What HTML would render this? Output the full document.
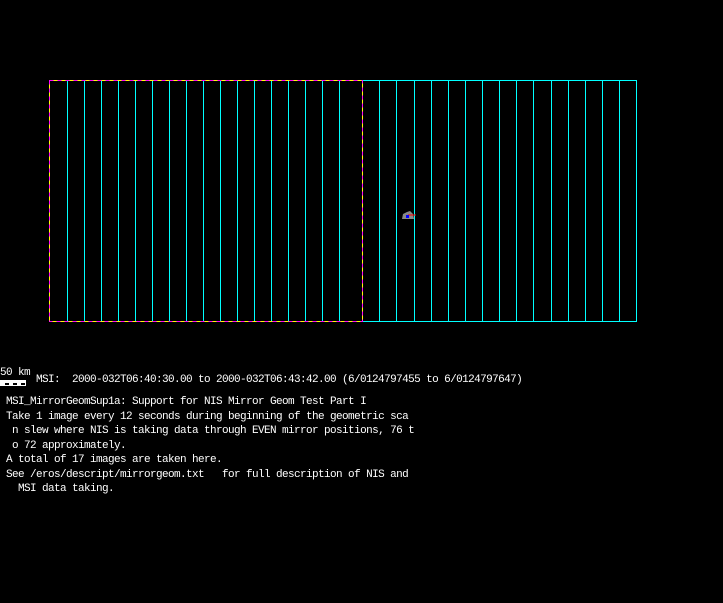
<!DOCTYPE html>
<html><head><style>
body{margin:0;background:#000;width:723px;height:603px;overflow:hidden;position:relative;font-family:"Liberation Mono",monospace;color:#fff}
.t{position:absolute;font-size:11px;letter-spacing:-0.6px;line-height:14.5px;white-space:pre;left:6px}
</style></head><body>
<svg width="723" height="603" style="position:absolute;left:0;top:0">
<g stroke="#00ffff" stroke-width="1" shape-rendering="crispEdges">
<line x1="362.5" y1="80.5" x2="636.5" y2="80.5"/>
<line x1="362.5" y1="321.5" x2="636.5" y2="321.5"/>
<line x1="636.5" y1="80" x2="636.5" y2="322"/>
<g id="l"></g>
</g>
<g stroke-width="1" shape-rendering="crispEdges" fill="none">
<rect x="49.5" y="80.5" width="313" height="241" stroke="#ffff00"/>
<rect x="49.5" y="80.5" width="313" height="241" stroke="#ff00ff" stroke-dasharray="4 4"/>
</g>
<g fill="#888"><polygon points="402,219 403,214 407,212 410,211 413,214 414,219"/></g>
<line x1="408" y1="215" x2="416" y2="215" stroke="#f00" stroke-width="1"/>
<rect x="406" y="215" width="3" height="3" fill="#00f"/>
<rect x="0" y="380" width="26" height="2" fill="#fff"/>
<rect x="0" y="382" width="26" height="4" fill="#fff"/>
<g fill="#000"><rect x="5" y="383" width="4" height="2"/><rect x="13" y="383" width="4" height="2"/><rect x="21" y="383" width="4" height="2"/></g>
</svg>
<script>
var g=document.getElementById('l'),s='';
var xs=[67,84,101,118,135,152,169,186,203,220,237,254,271,288,305,322,339,379,396,414,431,448,465,482,499,516,533,551,568,585,602,619];
xs.forEach(function(x){s+='<line x1="'+(x+.5)+'" y1="81" x2="'+(x+.5)+'" y2="321"/>';});
g.innerHTML=s;
</script>
<div class="t" style="left:0;top:366px">50 km</div>
<div class="t" style="left:36px;top:373px">MSI:  2000-032T06:40:30.00 to 2000-032T06:43:42.00 (6/0124797455 to 6/0124797647)</div>
<div class="t" style="top:395px">MSI_MirrorGeomSup1a: Support for NIS Mirror Geom Test Part I
Take 1 image every 12 seconds during beginning of the geometric sca
 n slew where NIS is taking data through EVEN mirror positions, 76 t
 o 72 approximately.
A total of 17 images are taken here.
See /eros/descript/mirrorgeom.txt   for full description of NIS and
  MSI data taking.</div>
</body></html>
